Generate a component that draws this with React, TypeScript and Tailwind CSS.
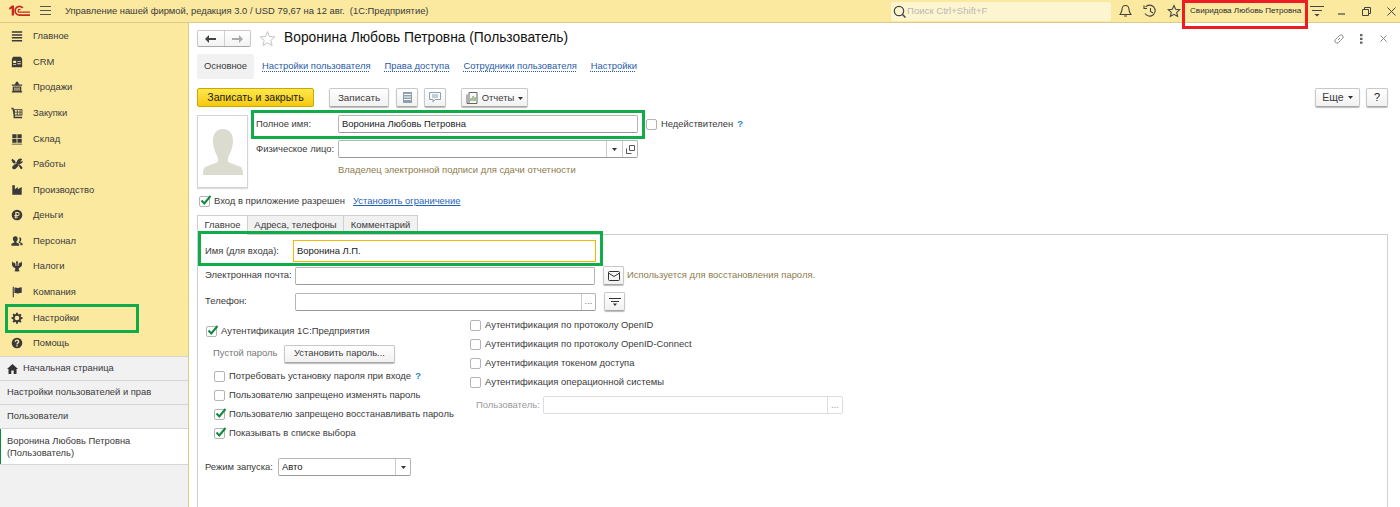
import React from "react";

const F = "font-['Liberation_Sans',Arial,sans-serif]";

const Ico = ({ children, s = 12 }: { children: React.ReactNode; s?: number }) => (
  <svg width={s} height={s} viewBox="0 0 14 14" fill="#3a3a3a" className="shrink-0">{children}</svg>
);

const icons: Record<string, React.ReactNode> = {
  main: <path d="M1 1.500h12v1.700H1zM1 4.900h12v1.700H1zM1 8.300h12v1.700H1zM1 11.700h12v1.700H1z" />,
  crm: <path fillRule="evenodd" d="M2.500 1h9l1.500 2.500V13H1V3.500zM2.500 5.500v2.800H6V5.500zM7.500 6v1h4V6zM7.500 8.500v1h4v-1zM2.500 9.500v1H6v-1z" />,
  sales: <path d="M6 1h2l1.500 3H13v1.500H1V4h3.500zM2 6.500h10V12h1v1.500H1V12h1zM4 7.500v4h1.200v-4zM6.400 7.500v4h1.200v-4zM8.800 7.500v4H10v-4z" fillRule="evenodd" />,
  buy: <path fillRule="evenodd" d="M.5 1h2.200l.6 1.500h10v7.500H4.500v1.500H13V13H3V10L1.800 2.500H.5zM4.500 3.500v2h2.300v-2zM7.800 3.500v2h2.200v-2zM11 3.500v2h1.300v-2zM4.500 6.500v2.300h2.300V6.500zM7.800 6.500v2.300h2.200V6.500zM11 6.500v2.300h1.300V6.500z" />,
  stock: <path d="M1.500 1.500h5V6h-5zM7.500 1.500h5V6h-5zM1.500 7h5v4.500h-5zM7.500 7h5v4.500h-5zM1 12.500h12v1H1z" />,
  work: <path fillRule="evenodd" d="M1.500 1L5 3.500V5l1.500 1.500-1 1L4 6H2.500L.5 2.500zM10 .8c1.300-.3 2.500.2 3 1.200l-2 1.500.5.800 2-1c.4 1.500-.5 3-2 3.200L6 12c-.7 1-2 1.300-3 1l-1.500-1c-.5-1.200 0-2.200 1-3l4.500-4.500C6.800 3 8 1.300 10 .8zM8.500 8l1-1 3.500 3.500c.5.700.5 1.500 0 2s-1.300.5-2 0z" />,
  prod: <path d="M1.500 12.500V1.500h3v4.500L8 3.500V6l4.500-2.500v9z" />,
  money: <path fillRule="evenodd" d="M7 .8a6.200 6.200 0 1 0 0 12.400A6.200 6.200 0 0 0 7 .8zM5 3.500h2.800a2.300 2.300 0 0 1 0 4.600H6.400v.8h2v1.100h-2v1H5v-1H4V8.900h1v-.8H4V7h1zM6.400 4.700V7h1.400a1.150 1.150 0 0 0 0-2.300z" />,
  staff: <path d="M5 1.500a2.800 2.800 0 0 1 2.800 3c0 1.500-.8 2.700-1.500 3.200v1l3.200 1.500v2.300H.5v-2.300l3.200-1.500v-1C3 7.200 2.200 6 2.200 4.500A2.800 2.800 0 0 1 5 1.500zM9.800 2.500a2.300 2.300 0 0 1 2.200 2.500c0 1.200-.6 2.200-1.200 2.700v.8l2.700 1.300v2.200h-2.500v-2l-2.200-1.300.8-1.300c.6-1 .6-3 0-4.600z" />,
  tax: <path fillRule="evenodd" d="M7 1l1.300 1.500-.5 1.500V7h1V4.500L10 3l.5 1L12 1.500 13 4l-.5 3-1.500 1.500L9 9.500V11l1 2-3 .5L4 13l1-2V9.500L3 8.500 1.500 7 1 4l1-2.500L3.500 4l.5-1 1.200 1.500V7h1V4l-.5-1.500z" />,
  firm: <path d="M2 1h1.300v12H2zM4 2c2-1 3 .8 5 0l3.500-.5V8L9 8.500c-2 .8-3-1-5 0z" />,
  gear: <path fillRule="evenodd" d="M6 .8h2l.3 1.800 1 .4 1.500-1 1.400 1.400-1 1.500.4 1 1.800.3v2l-1.800.3-.4 1 1 1.500-1.400 1.400-1.500-1-1 .4-.3 1.800H6l-.3-1.800-1-.4-1.500 1-1.400-1.400 1-1.500-.4-1L.6 8V6l1.800-.3.4-1-1-1.500 1.400-1.400 1.500 1 1-.4zM7 4.300a2.700 2.700 0 1 0 0 5.400 2.700 2.700 0 0 0 0-5.400z" />,
  help: <path fillRule="evenodd" d="M7 .8a6.200 6.200 0 1 0 0 12.400A6.200 6.200 0 0 0 7 .8zM7 3a2.600 2.600 0 0 1 2.700 2.500c0 1.700-1.800 1.900-1.900 3.200H6.200c0-2 1.900-2.300 1.900-3.200 0-.6-.5-1-1.100-1-.7 0-1.100.4-1.200 1.100L4.300 5.400C4.500 3.900 5.500 3 7 3zM6.200 9.500h1.600V11H6.200z" />,
};

const nav: [string, string][] = [
  ["main", "Главное"], ["crm", "CRM"], ["sales", "Продажи"], ["buy", "Закупки"], ["stock", "Склад"],
  ["work", "Работы"], ["prod", "Производство"], ["money", "Деньги"], ["staff", "Персонал"], ["tax", "Налоги"],
  ["firm", "Компания"], ["gear", "Настройки"], ["help", "Помощь"],
];

const Btn = ({ className = "", children }: { className?: string; children: React.ReactNode }) => (
  <div className={`flex shrink-0 items-center justify-center rounded-[2px] border border-[#c8c8c8] border-b-[#a8a8a8] bg-gradient-to-b from-white to-[#f1f1f1] shadow-[0_1px_1px_#bbb] ${className}`}>{children}</div>
);

const Check = ({ on = false, className = "" }: { on?: boolean; className?: string }) => (
  <div className={`relative size-[11px] shrink-0 rounded-[2px] border border-[#b4b4b4] bg-white ${className}`}>
    {on && (
      <svg width="12" height="11" viewBox="0 0 12 11" className="absolute -top-[2px] left-0">
        <path d="M1.500 5.500l2.800 3L10.500 1" fill="none" stroke="#0d8a3e" strokeWidth="2" />
      </svg>
    )}
  </div>
);

const Input = ({ className = "", children, value }: { className?: string; children?: React.ReactNode; value?: string }) => (
  <div className={`flex shrink-0 items-stretch rounded-[2px] border border-[#b5b5b5] border-b-[#999] bg-white text-[#222] ${className}`}>
    <div className="flex flex-1 items-center pl-[3px]">{value}</div>
    {children}
  </div>
);

const Tri = () => <svg width="5" height="3" viewBox="0 0 5 3"><path d="M0 0h5L2.500 3z" fill="#333" /></svg>;

const CheckRow = ({ on, label, q, className = "" }: { on?: boolean; label: string; q?: boolean; className?: string }) => (
  <div className={`flex h-[19px] items-center whitespace-nowrap ${className}`}>
    <Check on={on} />
    <span className="ml-[4px]">{label}</span>
    {q && <span className="ml-[4px] font-bold text-[#2a86c9]">?</span>}
  </div>
);

const Mark = ({ className }: { className: string }) => (
  <div className={`pointer-events-none absolute border-[3px] border-[#10ac4a] ${className}`} />
);

const Link = ({ children, className = "" }: { children: React.ReactNode; className?: string }) => (
  <span className={`text-[#2a5ba8] underline decoration-dotted underline-offset-2 ${className}`}>{children}</span>
);

export default function App() {
  return (
    <div className={`${F} relative flex h-[507px] w-[1400px] flex-col overflow-hidden bg-white text-[9.44px] text-[#3a3a3a]`}>
      {/* top bar */}
      <header className="flex h-[23px] shrink-0 items-center border-b border-[#dccb86] bg-[#fbe9a0] text-[9.4px]">
        <svg width="22" height="12" viewBox="0 0 22 12" className="ml-[9px] shrink-0">
          <path d="M0 3l3-2.500h2v10H2.700V3.500L.6 4.800zM21 11H10.500a5.200 5.200 0 1 1 4-8.500l-1.400 1A3.500 3.500 0 1 0 10.500 9.300H21zM21 7.800H10.500a2 2 0 1 1 1.500-3.300l-1.100.8a.7.7 0 1 0-.4 1.100H21z" fill="#c8291a" fillRule="evenodd" />
        </svg>
        <svg width="12" height="10" viewBox="0 0 12 10" className="ml-[9px] shrink-0"><path d="M0 .5h11M0 4.500h11M0 8.500h11" stroke="#555" /></svg>
        <span className="ml-[13px] whitespace-pre">Управление нашей фирмой, редакция 3.0 / USD 79,67 на 12 авг.  (1С:Предприятие)</span>
        <div className="ml-auto flex h-[19px] w-[220px] shrink-0 items-center rounded-[2px] bg-[#fdf5d0]">
          <svg width="13" height="13" viewBox="0 0 13 13" className="ml-[2px]"><circle cx="6" cy="6" r="4.700" fill="none" stroke="#444" strokeWidth="1.200" /><path d="M9.500 9.500l3 3" stroke="#444" strokeWidth="1.500" /></svg>
          <span className="ml-[1px] text-[9.6px] text-[#b9b9b0]">Поиск Ctrl+Shift+F</span>
        </div>
        <svg width="13" height="14" viewBox="0 0 13 14" className="ml-[8px] shrink-0" fill="none" stroke="#444" strokeWidth="1.100"><path d="M6.500 1.500c-2.500 0-3.500 2-3.500 4 0 2.500-1.500 4-2 5h11c-.5-1-2-2.500-2-5 0-2-1-4-3.500-4zM5 12h3" /></svg>
        <svg width="14" height="14" viewBox="0 0 14 14" className="ml-[11px] shrink-0" fill="none" stroke="#444" strokeWidth="1.100"><path d="M2.500 3A5.500 5.500 0 1 1 2 9.500M1 1.500v3h3M7.500 4v3.500l2.500 1.500" /></svg>
        <svg width="14" height="14" viewBox="0 0 14 14" className="ml-[10px] shrink-0" fill="none" stroke="#444" strokeWidth="1.100"><path d="M7 1.500l1.700 3.800 4 .4-3 2.700.9 4L7 10.300l-3.600 2.100.9-4-3-2.700 4-.4z" /></svg>
        <span className="ml-[9px] w-[112px] shrink-0 whitespace-nowrap text-[8.1px] text-[#2a2a2a]">Свиридова Любовь Петровна</span>
        <svg width="14" height="12" viewBox="0 0 14 12" className="ml-[8px] shrink-0"><path d="M0 1.500h14M2 5.500h10" stroke="#444" /><path d="M4.500 9h5L7 11.500z" fill="#444" /></svg>
        <svg width="8" height="8" viewBox="0 0 8 8" className="ml-[14px] shrink-0"><path d="M0 7h7" stroke="#444" strokeWidth="1.200" /></svg>
        <svg width="9" height="9" viewBox="0 0 9 9" className="ml-[16px] shrink-0" fill="none" stroke="#444"><path d="M.5 2.500h6v6h-6zM2.500 2.500v-2h6v6h-2" /></svg>
        <svg width="9" height="9" viewBox="0 0 9 9" className="ml-[16px] mr-[4px] shrink-0"><path d="M.5.500l8 8M8.500.500l-8 8" stroke="#444" /></svg>
      </header>

      <div className="flex min-h-0 flex-1">
        {/* sidebar */}
        <aside className="flex w-[189px] shrink-0 flex-col border-r border-[#dccb86] bg-[#f1f1f1] text-[9.4px]">
          <nav className="flex h-[334px] flex-col border-b border-[#d6d6d6] bg-[#fbe9a0] pt-[0.5px]">
            {nav.map(([k, label]) => (
              <div key={k} className="flex h-[25.6px] items-center pl-[11px]">
                <Ico>{icons[k]}</Ico>
                <span className="ml-[10px]">{label}</span>
              </div>
            ))}
          </nav>
          <div className="flex h-[24px] items-center border-b border-[#d6d6d6] pl-[7px]">
            <svg width="11" height="10" viewBox="0 0 11 10" className="mr-[5px]"><path d="M5.500 0L11 5H9.500v5H6.700V6.500H4.300V10H1.500V5H0z" fill="#333" /></svg>
            Начальная страница
          </div>
          <div className="flex h-[24px] items-center border-b border-[#d6d6d6] pl-[7px]">Настройки пользователей и прав</div>
          <div className="flex h-[24px] items-center border-b border-[#d6d6d6] pl-[7px]">Пользователи</div>
          <div className="flex h-[36px] items-center border-b border-[#d6d6d6] bg-white pl-[7px] shadow-[inset_1px_0_0_#0d8a3e]">
            <span className="leading-[12px]">Воронина Любовь Петровна<br />(Пользователь)</span>
          </div>
        </aside>

        {/* content */}
        <main className="relative min-w-0 flex-1 pl-[8px] pr-[12px]">
          {/* title row */}
          <div className="flex h-[31px] items-center">
            <div className="flex h-[17px] w-[54px] overflow-hidden rounded-[2px] border border-[#c8c8c8] border-b-[#a8a8a8] bg-gradient-to-b from-white to-[#f3f3f3]">
              <div className="flex flex-1 items-center justify-center border-r border-[#d0d0d0]">
                <svg width="11" height="8" viewBox="0 0 11 8"><path d="M0 4l4-4v3h7v2H4v3z" fill="#444" /></svg>
              </div>
              <div className="flex flex-1 items-center justify-center">
                <svg width="11" height="8" viewBox="0 0 11 8"><path d="M11 4L7 0v3H0v2h7v3z" fill="#aaa" /></svg>
              </div>
            </div>
            <svg width="17" height="17" viewBox="0 0 17 17" className="ml-[8px]" fill="none" stroke="#c4c4c4"><path d="M8.500 1.500l2 5 5.300.4-4 3.500 1.300 5.200-4.600-2.800-4.600 2.800 1.300-5.200-4-3.500 5.300-.4z" /></svg>
            <h1 className="ml-[8px] text-[13.8px] font-normal text-[#111]">Воронина Любовь Петровна (Пользователь)</h1>
            <div className="ml-auto flex items-center pr-[1px]">
              <svg width="12" height="12" viewBox="0 0 12 12" fill="none" stroke="#888"><path d="M5 7l2-2M4.500 4.500l2-2a2 2 0 0 1 3 3l-2 2M4.500 4.500l-2 2a2 2 0 0 0 3 3l2-2" /></svg>
              <svg width="3" height="10" viewBox="0 0 3 10" className="ml-[15px]" fill="#666"><path d="M0 0h2.500v2.200H0zM0 3.800h2.500V6H0zM0 7.600h2.500v2.200H0z" /></svg>
              <svg width="7" height="7" viewBox="0 0 7 7" className="ml-[17px]"><path d="M.5.500l6 6M6.500.500l-6 6" stroke="#888" /></svg>
            </div>
          </div>

          {/* section tabs */}
          <div className="flex h-[25px] items-center">
            <div className="flex h-[25px] w-[57px] items-center justify-center rounded-[2px] bg-[#f1f1f1]">Основное</div>
            <Link className="ml-[8px]">Настройки пользователя</Link>
            <Link className="ml-[14px]">Права доступа</Link>
            <Link className="ml-[14px]">Сотрудники пользователя</Link>
            <Link className="ml-[14px]">Настройки</Link>
          </div>

          {/* toolbar */}
          <div className="mt-[9px] flex h-[19px] items-center">
            <div className="flex h-[19px] w-[117px] items-center justify-center rounded-[2px] border border-[#c9a800] bg-gradient-to-b from-[#ffe84a] to-[#f5c800] pt-[1px] text-[10.6px] text-[#222]">Записать и закрыть</div>
            <Btn className="ml-[15px] h-[19px] w-[60px] pt-[1px] text-[9.9px]">Записать</Btn>
            <Btn className="ml-[7px] h-[19px] w-[22px]">
              <svg width="9" height="11" viewBox="0 0 9 11"><path d="M0 0h9v11H0z" fill="#8da0ad" /><path d="M1 2.500h7M1 5h7M1 7.500h7" stroke="#fff" /></svg>
            </Btn>
            <Btn className="ml-[6px] h-[19px] w-[22px]">
              <svg width="12" height="11" viewBox="0 0 12 11" fill="none" stroke="#8da0ad"><path d="M.5.500h11v7H6L4 10V7.500H.5zM3 3h6M3 5h6" /></svg>
            </Btn>
            <Btn className="ml-[15px] h-[19px] w-[67px] pt-[1px]">
              <svg width="12" height="12" viewBox="0 0 12 12" fill="none" stroke="#666"><path d="M3 .500h8v11H3zM1 2.500v9h7" /><path d="M5 9V6M7 9V4M9 9V5" stroke="#5a8a4a" /></svg>
              <span className="ml-[4px]">Отчеты</span>
              <span className="ml-[4px] flex"><Tri /></span>
            </Btn>
            <div className="ml-auto flex">
              <Btn className="h-[19px] w-[45px] text-[10.5px]">Еще<span className="ml-[4px] flex"><Tri /></span></Btn>
              <Btn className="ml-[6px] h-[19px] w-[22px] text-[11px] text-[#222]">?</Btn>
            </div>
          </div>

          {/* header form */}
          <div className="mt-[8px] flex h-[73px]">
            <div className="flex h-[73px] w-[51px] shrink-0 items-center justify-center border border-[#d4d4d4] shadow-[0_1px_1px_#ddd]">
              <svg width="40" height="46" viewBox="0 0 40 46" fill="#dcdbd0"><path d="M20 0c7 0 10 5 10 12 0 8-4 14-5 17v4l13 5c1 1 2 3 2 8H0c0-5 1-7 2-8l13-5v-4c-1-3-5-9-5-17C10 5 13 0 20 0z" /></svg>
            </div>
            <div className="ml-[8px] flex flex-col">
              <div className="flex items-center whitespace-nowrap">
                <span className="w-[82px]">Полное имя:</span>
                <Input className="h-[18px] w-[300px]" value="Воронина Любовь Петровна" />
                <Check className="ml-[8px]" />
                <span className="ml-[4px]">Недействителен</span>
                <span className="ml-[4px] font-bold text-[#2a86c9]">?</span>
              </div>
              <div className="mt-[7px] flex items-center whitespace-nowrap">
                <span className="w-[82px]">Физическое лицо:</span>
                <Input className="h-[18px] w-[300px]">
                  <div className="flex w-[16px] items-center justify-center border-l border-[#ccc]"><Tri /></div>
                  <div className="flex w-[15px] items-center justify-center border-l border-[#ccc]">
                    <svg width="9" height="9" viewBox="0 0 9 9" fill="none" stroke="#555"><path d="M3.500 .500h5v5h-5zM.5 3.500v5h5" /></svg>
                  </div>
                </Input>
              </div>
              <div className="mt-[5px] pl-[82px] text-[#8d7b4c]">Владелец электронной подписи для сдачи отчетности</div>
            </div>
          </div>

          <div className="mt-[4px] flex h-[18px] items-center pl-[2px]">
            <Check on />
            <span className="ml-[4px]">Вход в приложение разрешен</span>
            <span className="ml-[8px] text-[#1f63b8] underline">Установить ограничение</span>
          </div>

          {/* tabs */}
          <div className="mt-[5px] flex h-[20px] items-stretch">
            <div className="flex w-[51px] items-center justify-center border border-b-0 border-[#cfcfcf] bg-white">Главное</div>
            <div className="flex w-[96px] items-center justify-center border-y border-r border-[#cfcfcf] bg-[#f1f1f1]">Адреса, телефоны</div>
            <div className="flex w-[74px] items-center justify-center border-y border-r border-[#cfcfcf] bg-[#f1f1f1]">Комментарий</div>
          </div>
          <section className="-mt-[1px] h-[300px] border-x border-t border-[#cfcfcf] pl-[7px]">
            <div className="mt-[5px] flex h-[22px] items-center whitespace-nowrap">
              <span className="w-[88px]">Имя (для входа):</span>
              <div className="flex h-[22px] w-[303px] items-center border border-[#f5b800] pl-[3px] text-[#222]">Воронина Л.П.</div>
            </div>
            <div className="mt-[4px] flex h-[19px] items-center whitespace-nowrap">
              <span className="w-[90px]">Электронная почта:</span>
              <Input className="h-[18px] w-[300px]" />
              <Btn className="ml-[8px] h-[19px] w-[21px]">
                <svg width="12" height="10" viewBox="0 0 12 10" fill="none" stroke="#333"><rect x=".5" y=".5" width="11" height="9" rx="1" /><path d="M.5 2l5.500 3.500L11.500 2" /></svg>
              </Btn>
              <span className="ml-[3px] text-[#8d7b4c]">Используется для восстановления пароля.</span>
            </div>
            <div className="mt-[7px] flex h-[19px] items-center">
              <span className="w-[90px]">Телефон:</span>
              <Input className="h-[18px] w-[301px]">
                <div className="flex w-[14px] items-center justify-center border-l border-[#ccc] text-[#777]">...</div>
              </Input>
              <Btn className="ml-[8px] h-[19px] w-[21px]">
                <svg width="12" height="8" viewBox="0 0 12 8"><path d="M0 .500h12M2 3.500h8" stroke="#333" /><path d="M4 5.500h4L6 8z" fill="#333" /></svg>
              </Btn>
            </div>

            <div className="mt-[5px] flex">
              <div className="w-[264px] shrink-0 pt-[6px]">
                <CheckRow on label="Аутентификация 1С:Предприятия" className="pl-[1px]" />
                <div className="mt-[3px] flex h-[19px] items-center whitespace-nowrap pl-[8px]">
                  <span className="w-[71px] text-[#777]">Пустой пароль</span>
                  <Btn className="h-[18px] w-[111px]">Установить пароль...</Btn>
                </div>
                <div className="mt-[4px] pl-[9px]">
                  <CheckRow label="Потребовать установку пароля при входе" q />
                  <CheckRow label="Пользователю запрещено изменять пароль" />
                  <CheckRow on label="Пользователю запрещено восстанавливать пароль" />
                  <CheckRow on label="Показывать в списке выбора" />
                </div>
              </div>
              <div className="pl-[1px]">
                <CheckRow label="Аутентификация по протоколу OpenID" />
                <CheckRow label="Аутентификация по протоколу OpenID-Connect" />
                <CheckRow label="Аутентификация токеном доступа" />
                <CheckRow label="Аутентификация операционной системы" />
                <div className="mt-[4px] flex h-[18px] items-center whitespace-nowrap pl-[6px] text-[#9a9a9a]">
                  <span className="w-[67px]">Пользователь:</span>
                  <div className="flex h-[18px] w-[300px] justify-end rounded-[2px] border border-[#ddd]">
                    <div className="flex w-[15px] items-center justify-center border-l border-[#ddd]">...</div>
                  </div>
                </div>
              </div>
            </div>

            <div className="mt-[15px] flex h-[18px] items-center whitespace-nowrap">
              <span className="w-[73px]">Режим запуска:</span>
              <Input className="h-[18px] w-[133px]" value="Авто">
                <div className="flex w-[15px] items-center justify-center border-l border-[#ccc]"><Tri /></div>
              </Input>
            </div>
          </section>
        </main>
      </div>

      {/* annotations */}
      <div className="pointer-events-none absolute left-[1182px] top-0 h-[29px] w-[126px] border-[3px] border-[#ec1c24]" />
      <Mark className="left-[5px] top-[304px] h-[29px] w-[134px]" />
      <Mark className="left-[251px] top-[110px] h-[29px] w-[394px]" />
      <Mark className="left-[198px] top-[231px] h-[35px] w-[405px]" />
    </div>
  );
}
